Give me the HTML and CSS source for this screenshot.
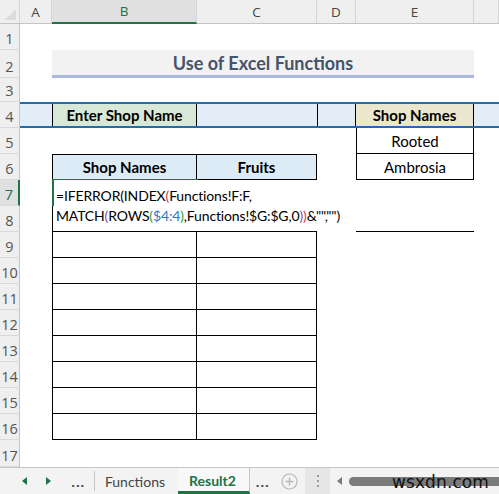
FILE: index.html
```html
<!DOCTYPE html>
<html>
<head>
<meta charset="utf-8">
<link rel="stylesheet" href="styles.css">
</head>
<body>
<div class="app">
  <div class="row hdr">
    <div class="corner"><span class="tri"></span></div>
    <div class="ch">A</div>
    <div class="ch sel">B</div>
    <div class="ch">C</div>
    <div class="ch">D</div>
    <div class="ch">E</div>
    <div class="ch"></div>
  </div>

  <div class="row r1">
    <div class="rh">1</div>
  </div>

  <div class="row r2">
    <div class="rh">2</div>
    <div class="c"></div>
    <div class="title">Use of Excel Functions</div>
  </div>

  <div class="row r3">
    <div class="rh">3</div>
  </div>

  <div class="row r4">
    <div class="rh">4</div>
    <div class="band">
      <div class="c"></div>
      <div class="c green bl br b">Enter Shop Name</div>
      <div class="c"></div>
      <div class="c bl br"></div>
      <div class="c tan br b">Shop Names</div>
      <div class="c"></div>
    </div>
  </div>

  <div class="row">
    <div class="rh">5</div>
    <div class="c"></div>
    <div class="c"></div>
    <div class="c"></div>
    <div class="c"></div>
    <div class="c bl br bb">Rooted</div>
  </div>

  <div class="row">
    <div class="rh">6</div>
    <div class="c"></div>
    <div class="c blue bt bl br bb b">Shop Names</div>
    <div class="c blue bt br bb b">Fruits</div>
    <div class="c"></div>
    <div class="c bl br bb">Ambrosia</div>
  </div>

  <div class="row pair">
    <div class="rhs">
      <div class="rh on">7</div>
      <div class="rh">8</div>
    </div>
    <div class="c"></div>
    <div class="formula">
      <span class="selbox"></span>
      <div>=IFERROR(INDEX<span class="p2">(</span>Functions!F:F,</div>
      <div>MATCH<span class="p3">(</span>ROWS<span class="p4">(</span><span class="ref">$4:4</span><span class="p4">)</span>,Functions!$G:$G,0<span class="p3">)</span><span class="p2">)</span>&amp;"",""<span>)</span></div>
    </div>
    <div class="c"></div>
    <div class="c bb"></div>
  </div>

  <div class="row"><div class="rh">9</div><div class="c"></div><div class="c bl br bb"></div><div class="c br bb"></div></div>
  <div class="row"><div class="rh">10</div><div class="c"></div><div class="c bl br bb"></div><div class="c br bb"></div></div>
  <div class="row"><div class="rh">11</div><div class="c"></div><div class="c bl br bb"></div><div class="c br bb"></div></div>
  <div class="row"><div class="rh">12</div><div class="c"></div><div class="c bl br bb"></div><div class="c br bb"></div></div>
  <div class="row"><div class="rh">13</div><div class="c"></div><div class="c bl br bb"></div><div class="c br bb"></div></div>
  <div class="row"><div class="rh">14</div><div class="c"></div><div class="c bl br bb"></div><div class="c br bb"></div></div>
  <div class="row"><div class="rh">15</div><div class="c"></div><div class="c bl br bb"></div><div class="c br bb"></div></div>
  <div class="row"><div class="rh">16</div><div class="c"></div><div class="c bl br bb"></div><div class="c br bb"></div></div>
  <div class="row r17"><div class="rh">17</div></div>

  <div class="tabs">
    <div class="navbtn w1"><span class="arr left"></span></div>
    <div class="navbtn w2"><span class="arr right"></span></div>
    <div class="navbtn w3 sep"><span class="dots">...</span></div>
    <div class="tab fn">Functions</div>
    <div class="tab active">Result2</div>
    <div class="navbtn w4"><span class="dots">...</span></div>
    <div class="plus">
      <svg width="17" height="17" viewBox="0 0 17 17"><circle cx="8.5" cy="8.5" r="7.5" fill="none" stroke="#b8b8b8" stroke-width="1.2"/><path d="M8.5 4.5v8M4.5 8.5h8" stroke="#b8b8b8" stroke-width="1.4"/></svg>
    </div>
    <div class="grip"><span></span><span></span><span></span></div>
    <div class="scroll">
      <span class="sarr"></span>
      <span class="thumb"></span>
      <span class="wm">wsxdn.com</span>
    </div>
  </div>
</div>
</body>
</html>
```

FILE: styles.css
```css
* { box-sizing: border-box; }
html, body { margin: 0; padding: 0; background: #fff; }
body { font-family: Lato, "Open Sans", sans-serif; font-size: 15px; color: #000; }
.app { width: 499px; height: 494px; overflow: hidden; display: flex; flex-direction: column; }

.row {
  display: grid;
  grid-template-columns: 20px 32px 145px 120px 39px 118px 1fr;
  height: 26px;
  flex-shrink: 0;
}
.hdr { height: 24px; background: #efefef; border-bottom: 1px solid #c4c4c4; }
.r2 { height: 28px; }
.r3 { height: 24px; }
.r17 { height: 27px; }
.pair { height: 52px; }

.corner { position: relative; border-right: 1px solid #d4d4d4; }
.tri {
  position: absolute; right: 3px; bottom: 3px; width: 0; height: 0;
  border-left: 11px solid transparent; border-bottom: 11px solid #dcdcdc;
}
.ch {
  display: flex; align-items: center; justify-content: center;
  font-family: "Open Sans", sans-serif; font-size: 13.5px; color: #444;
  border-right: 1px solid #d4d4d4;
}
.ch.sel { background: #e0e0e0; color: #217346; border-bottom: 2px solid #217346; margin-bottom: -1px; }

.rh {
  display: flex; align-items: flex-end; justify-content: center; padding-bottom: 1px;
  background: #efefef; color: #555; font-family: "Open Sans", sans-serif; font-size: 14.5px;
  border-right: 1px solid #c4c4c4; border-bottom: 1px solid #dadada; height: 100%;
}
.rhs { display: flex; flex-direction: column; }
.rhs .rh { height: 26px; }
.rh.on { background: #e0e0e0; color: #217346; border-right: 2px solid #217346; }

.c { display: flex; align-items: center; justify-content: center; white-space: nowrap; }
.b { font-weight: 700; }
.bl { border-left: 1px solid #000; }
.br { border-right: 1px solid #000; }
.bb { border-bottom: 1px solid #000; }
.bt { border-top: 1px solid #000; }
.blue { background: #ddebf7; }
.green { background: #d7e9d6; }
.tan { background: #ebe7cf; }

.title {
  grid-column: 3 / 7;
  background: #f2f2f2;
  border-bottom: 3px solid #a9b8dc;
  display: flex; align-items: center; justify-content: center;
  font-weight: 700; font-size: 18px; color: #44546a;
}

.band {
  grid-column: 2 / 8;
  display: grid;
  grid-template-columns: 32px 145px 120px 39px 118px 1fr;
  background: #e2edf8;
  border-top: 2px solid #1f6fae;
  border-bottom: 2px solid #1f6fae;
}

.formula {
  grid-column: 3 / 5;
  position: relative;
  border-left: 1px solid #000;
  border-bottom: 1px solid #000;
  padding: 6px 0 0 3px;
  line-height: 20px;
  font-size: 14px;
  letter-spacing: -0.15px;
  white-space: nowrap;
  overflow: visible;
  z-index: 1;
}
.selbox {
  position: absolute; left: -1px; top: -1px; width: 146px; height: 27px;
  border-left: 2px solid #217346; border-top: 1px solid #217346;
}
.p2 { color: #e0314b; }
.p3 { color: #8e4ea8; }
.p4 { color: #3b9b3b; }
.ref { color: #2f78c4; }

.tabs {
  height: 27px;
  flex-shrink: 0;
  background: #f3f3f3;
  border-top: 1px solid #c6c6c6;
  display: flex; align-items: stretch;
  font-family: Lato, "Open Sans", sans-serif; font-size: 14px; color: #444;
}
.tabs > * { flex-shrink: 0; }
.navbtn { display: flex; align-items: center; justify-content: center; }
.w1 { width: 36px; }
.w2 { width: 25px; }
.w3 { width: 34px; }
.w4 { width: 25px; }
.sep { border-right: 1px solid #c6c6c6; margin: 3px 0; }
.arr { width: 0; height: 0; border-top: 4px solid transparent; border-bottom: 4px solid transparent; }
.arr.left { margin-left: 12px; border-right: 5px solid #217346; }
.arr.right { border-left: 5px solid #217346; }
.dots {
  font-family: "DejaVu Sans", sans-serif; font-weight: 700; font-size: 11px;
  color: #4a4a4a; letter-spacing: 0.5px; line-height: 1; padding-top: 5px;
}
.w3 .dots { margin-left: 1px; }
.tab { display: flex; align-items: center; justify-content: center; padding: 0; }
.tab.fn { width: 83px; padding-right: 3px; }
.tab.active { width: 72px; color: #217346; font-weight: 700; background: #f8f8f8; border-bottom: 3px solid #217346; border-right: 1px solid #c6c6c6; padding-top: 2px; padding-right: 2px; }
.plus { width: 28px; display: flex; align-items: center; justify-content: center; }
.grip { width: 25px; margin-left: 2px; background: #e6e6e6; display: flex; flex-direction: column; align-items: center; justify-content: center; gap: 3px; }
.grip span { width: 2px; height: 2px; background: #999; }
.scroll { flex: 1 1 auto; display: flex; align-items: center; position: relative; }
.sarr { margin-left: 7px; width: 0; height: 0; border-top: 4px solid transparent; border-bottom: 4px solid transparent; border-right: 5px solid #7b7b7b; }
.thumb { flex: 1; margin-left: 7px; height: 9px; background: #7b7b7b; border-radius: 5px 0 0 5px; }
.wm { position: absolute; right: 10px; top: 4px; font-family: "DejaVu Sans", sans-serif; font-size: 17px; color: #111; letter-spacing: 0.1px; }
```
